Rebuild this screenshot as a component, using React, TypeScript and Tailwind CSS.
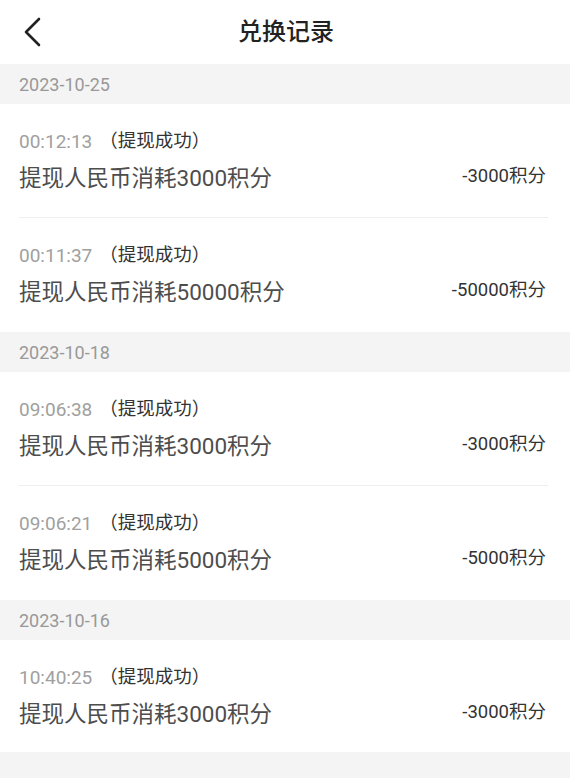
const groups = [
  {
    date: "2023-10-25",
    items: [
      { time: "00:12:13", amount: 3000 },
      { time: "00:11:37", amount: 50000 },
    ],
  },
  {
    date: "2023-10-18",
    items: [
      { time: "09:06:38", amount: 3000 },
      { time: "09:06:21", amount: 5000 },
    ],
  },
  {
    date: "2023-10-16",
    items: [{ time: "10:40:25", amount: 3000 }],
  },
];

export default function App() {
  return (
    <div
      className="w-[570px] h-[778px] bg-[#f4f4f4] overflow-hidden"
      style={{ fontFamily: "Roboto, 'Noto Sans CJK SC', sans-serif" }}
    >
      {/* Header */}
      <div className="h-[64px] bg-white flex items-center relative">
        <button className="w-[64px] h-[64px] flex items-center pl-[22px]">
          <svg width="20" height="30" viewBox="0 0 20 30" fill="none">
            <path d="M17 2 L4 15 L17 28" stroke="#222" strokeWidth="2.6" strokeLinecap="round" strokeLinejoin="round" />
          </svg>
        </button>
        <h1 className="absolute left-0 right-0 text-center text-[24px] font-medium text-[#222] pl-[2px] pointer-events-none">
          兑换记录
        </h1>
      </div>

      {groups.map((g, gi) => (
        <div key={g.date}>
          <div className="h-[40px] flex items-center px-[19px] text-[18px] text-[#999]">{g.date}</div>
          <div className="bg-white pl-[19px] pr-[22px]">
            {g.items.map((it, i) => {
              const last = i === g.items.length - 1;
              const end = last && gi === groups.length - 1;
              return (
                <div
                  key={it.time}
                  className={
                    end
                      ? "h-[112px] pt-[24px]"
                      : last
                        ? "h-[114px] pt-[24px]"
                        : "h-[114px] border-b border-[#eeeeee] pt-[24px]"
                  }
                >
                  <div className="flex items-center h-[26px] leading-none">
                    <span className="text-[19px] text-[#a0a0a0]">{it.time}</span>
                    <span className="text-[18.5px] text-[#333] ml-[7px]">（提现成功）</span>
                  </div>
                  <div className="flex items-center justify-between h-[32px] mt-[8px] pr-[2px]">
                    <span className="text-[22.5px] text-[#4d4d4d] leading-none">提现人民币消耗{it.amount}积分</span>
                    <span className="text-[18.5px] text-[#333] leading-none mb-[4px]">-{it.amount}积分</span>
                  </div>
                </div>
              );
            })}
          </div>
        </div>
      ))}
    </div>
  );
}
